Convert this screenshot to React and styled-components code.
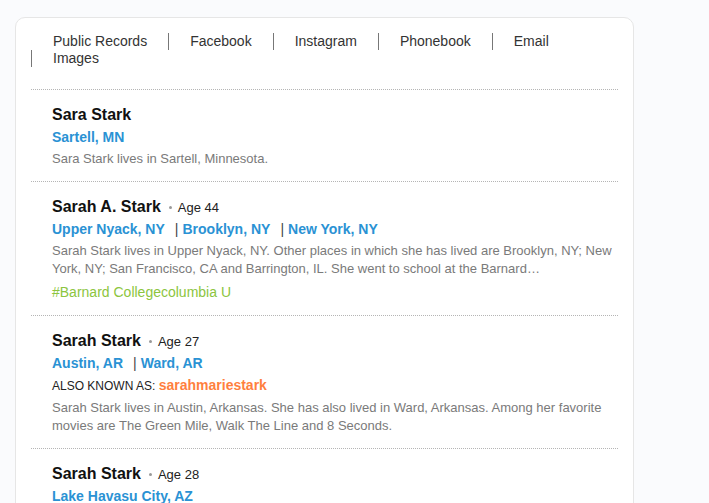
import React from "react";
import styled, { createGlobalStyle } from "styled-components";

const Global = createGlobalStyle`
  html, body { margin: 0; padding: 0; overflow: hidden; background: #fafbfd; }
  body { font-family: "Liberation Sans", Arial, sans-serif; }
  * { box-sizing: border-box; }
`;

const Page = styled.div`
  padding: 17px 0 0 15px;
`;

const Card = styled.div`
  width: 619px;
  background: #fff;
  border: 1px solid #e6e6e6;
  border-radius: 10px;
  padding: 15px 15px 0 15px;
`;

const Nav = styled.ul`
  list-style: none;
  margin: 0;
  padding: 0 0 22px 0;
  display: flex;
  flex-wrap: wrap;
  border-bottom: 1px dotted #b5b5b5;
`;

const NavItem = styled.li`
  display: block;
  font-size: 14px;
  line-height: 17px;
  color: #333;
  padding: 0 21px;
  border-left: 1px solid ${(p) => (p.$first ? "transparent" : "#777")};
`;

const Record = styled.div`
  padding: 14px 0 13px 21px;
  border-bottom: 1px dotted #b5b5b5;
`;

const NameRow = styled.div`
  height: 22px;
  line-height: 22px;
  white-space: nowrap;
`;

const Name = styled.span`
  font-size: 16px;
  font-weight: bold;
  color: #111;
`;

const Age = styled.span`
  font-size: 13px;
  line-height: 14px;
  color: #222;
  &::before {
    content: "";
    display: inline-block;
    width: 3px;
    height: 3px;
    border-radius: 50%;
    background: #999;
    margin: 0 6px 0 8px;
    vertical-align: 3px;
  }
`;

const Locations = styled.div`
  line-height: 22px;
  font-size: 14px;
`;

const Location = styled.span`
  font-weight: bold;
  color: #2a92d4;
`;

const Sep = styled.span`
  color: #444;
  margin: 0 4px 0 10px;
`;

const Aka = styled.div`
  line-height: 22px;
  font-size: 12px;
  color: #222;
`;

const AkaName = styled.span`
  font-size: 14px;
  font-weight: bold;
  color: #ff7f3e;
`;

const Desc = styled.p`
  margin: 2px 0 0;
  font-size: 13px;
  line-height: 18px;
  color: #7a7a7a;
`;

const Tag = styled.div`
  margin-top: 4px;
  font-size: 14px;
  line-height: 20px;
  color: #8cc540;
`;

const navItems = ["Public Records", "Facebook", "Instagram", "Phonebook", "Email", "Images"];

const records = [
  {
    name: "Sara Stark",
    locations: ["Sartell, MN"],
    desc: "Sara Stark lives in Sartell, Minnesota.",
  },
  {
    name: "Sarah A. Stark",
    age: 44,
    locations: ["Upper Nyack, NY", "Brooklyn, NY", "New York, NY"],
    desc:
      "Sarah Stark lives in Upper Nyack, NY. Other places in which she has lived are Brooklyn, NY; New York, NY; San Francisco, CA and Barrington, IL. She went to school at the Barnard…",
    tag: "#Barnard Collegecolumbia U",
  },
  {
    name: "Sarah Stark",
    age: 27,
    locations: ["Austin, AR", "Ward, AR"],
    aka: "sarahmariestark",
    desc:
      "Sarah Stark lives in Austin, Arkansas. She has also lived in Ward, Arkansas. Among her favorite movies are The Green Mile, Walk The Line and 8 Seconds.",
  },
  {
    name: "Sarah Stark",
    age: 28,
    locations: ["Lake Havasu City, AZ"],
  },
];

export default function App() {
  return (
    <Page>
      <Global />
      <Card>
        <Nav>
          {navItems.map((n, i) => (
            <NavItem key={n} $first={i === 0}>
              {n}
            </NavItem>
          ))}
        </Nav>
        {records.map((r, i) => (
          <Record key={i}>
            <NameRow>
              <Name>{r.name}</Name>
              {r.age && <Age>Age {r.age}</Age>}
            </NameRow>
            <Locations>
              {r.locations.map((l, j) => (
                <React.Fragment key={l}>
                  {j > 0 && <Sep>|</Sep>}
                  <Location>{l}</Location>
                </React.Fragment>
              ))}
            </Locations>
            {r.aka && (
              <Aka>
                ALSO KNOWN AS: <AkaName>{r.aka}</AkaName>
              </Aka>
            )}
            {r.desc && <Desc>{r.desc}</Desc>}
            {r.tag && <Tag>{r.tag}</Tag>}
          </Record>
        ))}
      </Card>
    </Page>
  );
}
